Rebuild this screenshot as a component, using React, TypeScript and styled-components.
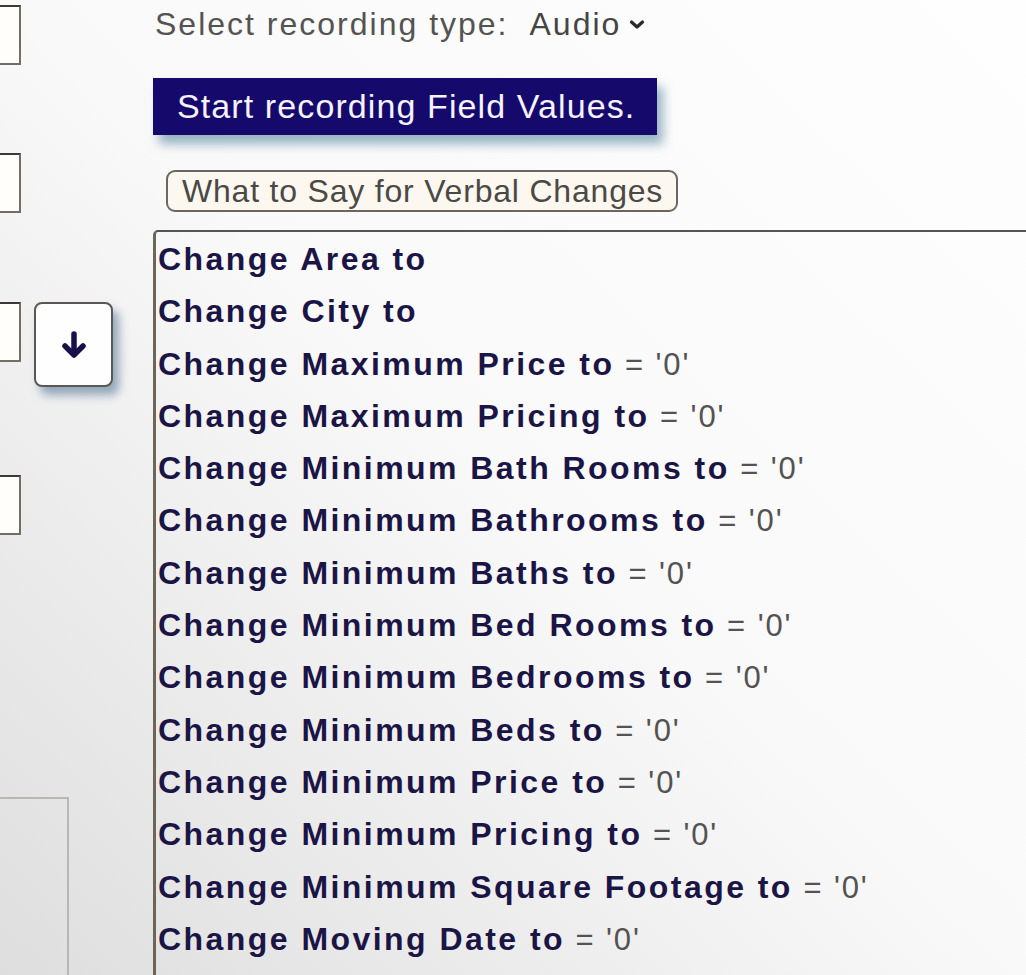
import React from "react";
import styled, { createGlobalStyle } from "styled-components";

const GlobalStyle = createGlobalStyle`
  html, body {
    margin: 0;
    padding: 0;
    height: 100%;
  }
  body {
    font-family: "Liberation Sans", Arial, sans-serif;
    background: linear-gradient(to bottom left, #fefefe 0%, #f9f9f9 50%, #dedede 100%);
    overflow: hidden;
  }
`;

const Page = styled.div`
  display: flex;
  height: 975px;
  overflow: hidden;
`;

const LeftColumn = styled.div`
  width: 153px;
  flex-shrink: 0;
  display: flex;
  flex-direction: column;
  align-items: flex-start;
  gap: 88px;
  padding-top: 5px;
  box-sizing: border-box;
`;

const FieldBox = styled.div`
  width: 21px;
  height: 60px;
  box-sizing: border-box;
  border: 2px solid #736d63;
  border-left: none;
  border-top-color: #3d3a36;
  background: #fffefb;
`;

const ArrowRow = styled.div`
  display: flex;
  align-items: flex-start;
  gap: 13px;
  margin-top: 1px;
`;

const ArrowButton = styled.button`
  width: 79px;
  height: 85px;
  box-sizing: border-box;
  border: 2px solid #5a5853;
  border-radius: 8px;
  background: #fefefe;
  box-shadow: 6px 8px 10px rgba(70, 105, 140, 0.55);
  display: flex;
  align-items: center;
  justify-content: center;
  padding: 0;
`;

const BottomBox = styled.div`
  width: 69px;
  flex: 1;
  margin-top: 174px;
  box-sizing: border-box;
  border-top: 2px solid #b9b7b2;
  border-right: 2px solid #b9b7b2;
`;

const RightColumn = styled.div`
  flex: 1;
  min-width: 0;
  display: flex;
  flex-direction: column;
  align-items: flex-start;
`;

const SelectRow = styled.div`
  display: flex;
  align-items: center;
  padding-top: 6px;
  margin-left: 2px;
  font-size: 32px;
  letter-spacing: 2px;
  color: #555352;
`;

const SelectValue = styled.span`
  display: inline-flex;
  align-items: center;
  gap: 8px;
  margin-left: 21px;
  color: #464444;
`;

const StartButton = styled.button`
  margin-top: 35px;
  height: 57px;
  padding: 0 22px 0 24px;
  border: none;
  background: #150a6c;
  color: #f6f2ff;
  font-family: "Liberation Sans", Arial, sans-serif;
  font-size: 34px;
  letter-spacing: 1.1px;
  line-height: 57px;
  box-shadow: 6px 9px 10px rgba(70, 120, 150, 0.55);
`;

const HelpButton = styled.button`
  margin-top: 35px;
  margin-left: 13px;
  height: 42px;
  padding: 0 13px 0 14px;
  box-sizing: border-box;
  border: 2px solid #6b6760;
  border-radius: 9px;
  background: #fdf8ef;
  color: #4b4946;
  font-family: "Liberation Sans", Arial, sans-serif;
  font-size: 32px;
  letter-spacing: 0.8px;
  line-height: 38px;
`;

const ListBox = styled.div`
  margin-top: 18px;
  width: calc(100% + 20px);
  flex: 1;
  box-sizing: border-box;
  border-top: 2px solid #555;
  border-left: 3px solid #6d6558;
  border-top-left-radius: 5px;
  padding-left: 2px;
  padding-top: 1px;
`;

const Option = styled.div`
  height: 52.3px;
  line-height: 52.3px;
  font-size: 32px;
  white-space: nowrap;
`;

const OptionLabel = styled.span`
  font-weight: 700;
  letter-spacing: 2.45px;
  color: #1b1546;
`;

const OptionValue = styled.span`
  font-size: 31px;
  letter-spacing: 1.9px;
  color: #545252;
`;

const options: { label: string; value?: string }[] = [
  { label: "Change Area to" },
  { label: "Change City to" },
  { label: "Change Maximum Price to", value: "'0'" },
  { label: "Change Maximum Pricing to", value: "'0'" },
  { label: "Change Minimum Bath Rooms to", value: "'0'" },
  { label: "Change Minimum Bathrooms to", value: "'0'" },
  { label: "Change Minimum Baths to", value: "'0'" },
  { label: "Change Minimum Bed Rooms to", value: "'0'" },
  { label: "Change Minimum Bedrooms to", value: "'0'" },
  { label: "Change Minimum Beds to", value: "'0'" },
  { label: "Change Minimum Price to", value: "'0'" },
  { label: "Change Minimum Pricing to", value: "'0'" },
  { label: "Change Minimum Square Footage to", value: "'0'" },
  { label: "Change Moving Date to", value: "'0'" },
];

const ArrowDown = () => (
  <svg width="26" height="28" viewBox="0 0 26 28" fill="none">
    <path d="M13 3 V23" stroke="#17114a" strokeWidth="5.5" strokeLinecap="round" />
    <path d="M4 15 L13 24 L22 15" stroke="#17114a" strokeWidth="5.5" strokeLinecap="round" strokeLinejoin="round" />
  </svg>
);

const Chevron = () => (
  <svg width="16" height="11" viewBox="0 0 16 11" fill="none">
    <path d="M2.5 3 L8 8 L13.5 3" stroke="#2a2a2a" strokeWidth="3.2" strokeLinecap="round" strokeLinejoin="round" />
  </svg>
);

export default function App() {
  return (
    <>
      <GlobalStyle />
      <Page>
        <LeftColumn>
          <FieldBox />
          <FieldBox />
          <ArrowRow>
            <FieldBox />
            <ArrowButton aria-label="Move down">
              <ArrowDown />
            </ArrowButton>
          </ArrowRow>
          <FieldBox />
          <BottomBox />
        </LeftColumn>
        <RightColumn>
          <SelectRow>
            Select recording type:
            <SelectValue>
              Audio
              <Chevron />
            </SelectValue>
          </SelectRow>
          <StartButton>Start recording Field Values.</StartButton>
          <HelpButton>What to Say for Verbal Changes</HelpButton>
          <ListBox>
            {options.map((o) => (
              <Option key={o.label}>
                <OptionLabel>{o.label}</OptionLabel>
                {o.value && <OptionValue> = {o.value}</OptionValue>}
              </Option>
            ))}
          </ListBox>
        </RightColumn>
      </Page>
    </>
  );
}
